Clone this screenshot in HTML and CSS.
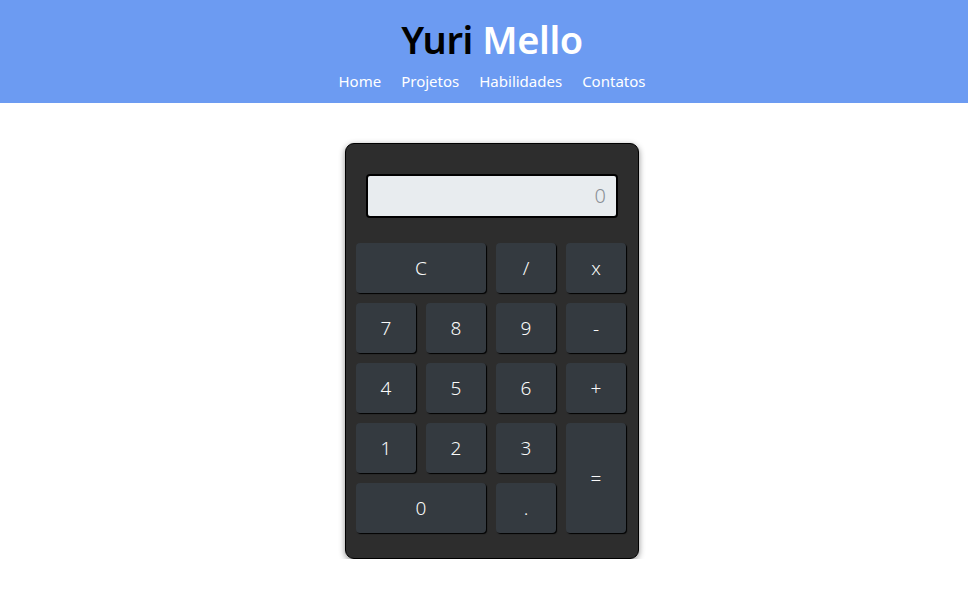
FILE: index.html
```html
<!DOCTYPE html>
<html lang="pt-BR">
<head>
<meta charset="utf-8">
<title>Yuri Mello - Calculadora</title>
<link rel="stylesheet" href="styles.css">
</head>
<body>
<header class="site-header">
  <h1 class="title"><span class="first">Yuri</span> <span class="last">Mello</span></h1>
  <nav class="nav">
    <a href="#">Home</a>
    <a href="#">Projetos</a>
    <a href="#">Habilidades</a>
    <a href="#">Contatos</a>
  </nav>
</header>
<main class="main">
  <div class="calc">
    <div class="display">0</div>
    <div class="keys">
      <button class="key wide">C</button>
      <button class="key">/</button>
      <button class="key">x</button>
      <button class="key">7</button>
      <button class="key">8</button>
      <button class="key">9</button>
      <button class="key">-</button>
      <button class="key">4</button>
      <button class="key">5</button>
      <button class="key">6</button>
      <button class="key">+</button>
      <button class="key">1</button>
      <button class="key">2</button>
      <button class="key">3</button>
      <button class="key tall">=</button>
      <button class="key wide">0</button>
      <button class="key">.</button>
    </div>
  </div>
</main>
</body>
</html>
```
FILE: styles.css
```css
* { box-sizing: border-box; }
body {
  margin: 0;
  background: #fff;
  font-family: "Noto Sans", "Open Sans", sans-serif;
}
.site-header {
  background: #6c9bf2;
  height: 103px;
  display: flex;
  flex-direction: column;
  align-items: center;
  padding-top: 13px;
  padding-left: 16px;
}
.title {
  margin: 0;
  font-size: 38px;
  font-weight: 600;
  line-height: 52px;
  letter-spacing: -0.4px;
}
.title .first { color: #000; }
.title .last { color: #fff; }
.nav {
  display: flex;
  gap: 20px;
  margin-top: 4px;
}
.nav a {
  color: #fff;
  text-decoration: none;
  font-size: 15px;
  line-height: 24px;
}
.main {
  display: flex;
  justify-content: center;
  padding-top: 40px;
  padding-left: 16px;
}
.calc {
  width: 294px;
  height: 416px;
  background: #2d2d2d;
  border: 1px solid #000;
  border-radius: 9px;
  box-shadow: 0 2px 6px rgba(0,0,0,0.45);
  padding: 30px 12px 0 10px;
}
.display {
  margin: 0 8px 0 10px;
  height: 44px;
  background: #e8ecef;
  border: 2px solid #000;
  border-radius: 4px;
  color: #8a9096;
  font-size: 20px;
  font-weight: 300;
  text-align: right;
  padding: 0 10px;
  line-height: 40px;
}
.keys {
  margin-top: 25px;
  display: grid;
  grid-template-columns: repeat(4, 60px);
  grid-auto-rows: 50px;
  gap: 10px;
}
.key {
  background: #343a40;
  border: none;
  border-radius: 4px;
  box-shadow: 1px 1px 1px #000;
  color: #fafafa;
  font-family: "Noto Sans", "Open Sans", sans-serif;
  font-size: 19px;
  font-weight: 300;
  padding: 0;
}
.wide { grid-column: span 2; }
.tall { grid-column: 4; grid-row: 4 / span 2; }
```
